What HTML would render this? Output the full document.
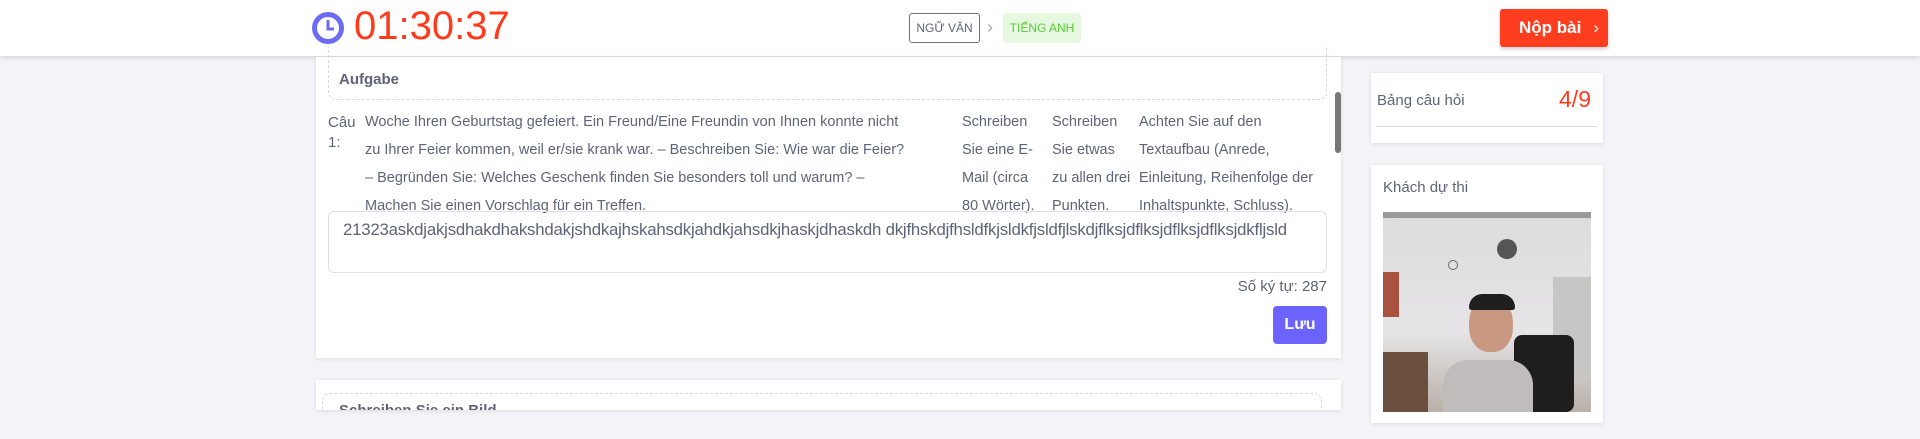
<!DOCTYPE html>
<html><head><meta charset="utf-8"><style>
*{box-sizing:border-box;margin:0;padding:0}
body{width:1920px;height:439px;overflow:hidden;background:#f3f3f8;font-family:"Liberation Sans",sans-serif;color:#5d6478;position:relative}
.hdr{position:absolute;left:0;top:0;width:1920px;height:56px;background:#fff;box-shadow:0 2px 4px rgba(0,0,0,.12)}
.abs{position:absolute}
.card{position:absolute;background:#fff;box-shadow:0 1px 4px rgba(0,0,0,.1)}
.ln{position:absolute;font-size:14.5px;line-height:28px}
</style></head><body>
<div class="hdr">
 <svg class="abs" style="left:311px;top:11px" width="34" height="34" viewBox="0 0 34 34"><circle cx="17" cy="17" r="13.5" fill="none" stroke="#6b6cf2" stroke-width="5"/><path d="M17 9v9h6" fill="none" stroke="#6b6cf2" stroke-width="3"/></svg>
 <div class="abs" style="left:354px;top:4px;font-size:40px;color:#ff3b1e">01:30:37</div>
 <div class="abs" style="left:909px;top:13px;width:71px;height:30px;border:1px solid #6b7386;border-radius:3px;font-size:12px;line-height:28px;text-align:center;color:#5d6478">NGỮ VĂN</div>
 <div class="abs" style="left:987px;top:17px;font-size:18px;color:#aaa">›</div>
 <div class="abs" style="left:1003px;top:13px;width:78px;height:30px;background:#e6f8df;border-radius:3px;font-size:12px;line-height:30px;text-align:center;color:#5cc93a">TIẾNG ANH</div>
 <div class="abs" style="left:1500px;top:9px;width:108px;height:38px;background:#ff3d1f;border-radius:3px;box-shadow:0 2px 4px rgba(0,0,0,.2);color:#fff;font-size:17px;font-weight:bold;line-height:38px;padding-left:19px;white-space:nowrap">Nộp bài<span style="font-weight:normal;margin-left:12px;font-size:17px">›</span></div>
</div>

<div class="card" style="left:316px;top:57px;width:1025px;height:301px">
 <div class="abs" style="left:12px;top:-10px;width:999px;height:53px;border:1px dashed #d4d8e0;border-top:none;border-radius:0 0 8px 8px"></div>
 <div class="abs" style="left:23px;top:14px;font-size:15px;font-weight:bold;color:#5d6478">Aufgabe</div>
 <div class="abs" style="left:12px;top:56px;width:30px;font-size:15px;line-height:20px">Câu 1:</div>
 <div class="ln" style="left:49px;top:51px;width:600px">Woche Ihren Geburtstag gefeiert. Ein Freund/Eine Freundin von Ihnen konnte nicht<br>zu Ihrer Feier kommen, weil er/sie krank war. – Beschreiben Sie: Wie war die Feier?<br>– Begründen Sie: Welches Geschenk finden Sie besonders toll und warum? –<br>Machen Sie einen Vorschlag für ein Treffen.</div>
 <div class="ln" style="left:646px;top:51px">Schreiben<br>Sie eine E-<br>Mail (circa<br>80 Wörter).</div>
 <div class="ln" style="left:736px;top:51px">Schreiben<br>Sie etwas<br>zu allen drei<br>Punkten.</div>
 <div class="ln" style="left:823px;top:51px">Achten Sie auf den<br>Textaufbau (Anrede,<br>Einleitung, Reihenfolge der<br>Inhaltspunkte, Schluss).</div>
 <div class="abs" style="left:12px;top:154px;width:999px;height:62px;border:1px solid #dde0e6;border-radius:6px;padding:8px 14px;font-size:16.8px;white-space:nowrap;overflow:hidden;letter-spacing:-.2px">21323askdjakjsdhakdhakshdakjshdkajhskahsdkjahdkjahsdkjhaskjdhaskdh dkjfhskdjfhsldfkjsldkfjsldfjlskdjflksjdflksjdflksjdflksjdkfljsld</div>
 <div class="abs" style="right:14px;top:221px;font-size:15px">Số ký tự: 287</div>
 <div class="abs" style="left:957px;top:249px;width:54px;height:38px;background:#6b63fb;border-radius:4px;color:#fff;font-size:16px;font-weight:bold;line-height:38px;text-align:center">Lưu</div>
 <div class="abs" style="left:1019px;top:35px;width:6px;height:61px;background:#777;border-radius:3px"></div>
</div>

<div class="card" style="left:316px;top:380px;width:1025px;height:30px;overflow:hidden">
 <div class="abs" style="left:6px;top:13px;width:1000px;height:40px;border:1px dashed #d4d8e0;border-radius:8px"></div>
 <div class="abs" style="left:23px;top:22px;font-size:15px;font-weight:bold">Schreiben Sie ein Bild</div>
</div>

<div class="card" style="left:1371px;top:73px;width:232px;height:70px">
 <div class="abs" style="left:6px;top:19px;font-size:15px">Bảng câu hỏi</div>
 <div class="abs" style="right:12px;top:13px;font-size:23px;color:#ff3b1e">4/9</div>
 <div class="abs" style="left:6px;top:53px;width:220px;height:1px;background:#d6dae2"></div>
</div>

<div class="card" style="left:1371px;top:165px;width:232px;height:258px">
 <div class="abs" style="left:12px;top:14px;font-size:15px">Khách dự thi</div>
 <div class="abs" style="left:12px;top:47px;width:208px;height:200px;overflow:hidden;background:linear-gradient(#dcdcdc,#e6e4e6 60%,#b8b0a8)">
  <div class="abs" style="left:0;top:0;width:208px;height:6px;background:#999"></div>
  <div class="abs" style="left:0;top:60px;width:16px;height:45px;background:#a8523f"></div>
  <div class="abs" style="left:114px;top:27px;width:20px;height:20px;border-radius:50%;background:#555"></div>
  <div class="abs" style="left:65px;top:48px;width:10px;height:10px;border-radius:50%;border:1px solid #666"></div>
  <div class="abs" style="left:170px;top:65px;width:38px;height:100px;background:#c6c6c4"></div>
  <div class="abs" style="left:131px;top:123px;width:60px;height:77px;background:#1e1e1e;border-radius:8px"></div>
  <div class="abs" style="left:0;top:140px;width:45px;height:60px;background:#6b5040"></div>
  <div class="abs" style="left:86px;top:86px;width:44px;height:54px;background:#c89880;border-radius:45%"></div>
  <div class="abs" style="left:86px;top:82px;width:46px;height:16px;background:#1f1f1f;border-radius:20px 20px 4px 4px"></div>
  <div class="abs" style="left:60px;top:148px;width:90px;height:60px;background:#c0bcbc;border-radius:25px 25px 0 0"></div>
 </div>
</div>
</body></html>
